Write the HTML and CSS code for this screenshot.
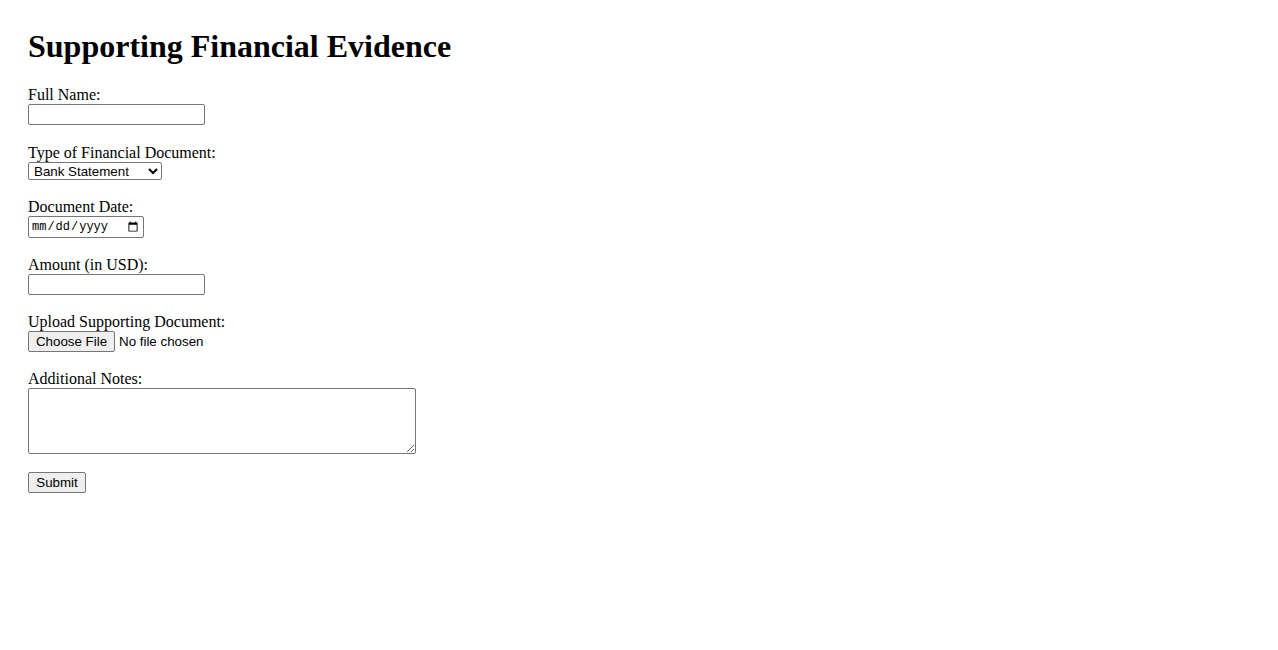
FILE: index.html
```html
<!DOCTYPE html>
<html lang="en">
<head>
<meta charset="utf-8">
<title>Supporting Financial Evidence</title>
<link rel="stylesheet" href="styles.css">
</head>
<body>
<h1 class="title">Supporting Financial Evidence</h1>
<form class="form">
  <div class="field">
    <label class="label" for="name">Full Name:</label>
    <input class="text-input" type="text" id="name" name="name">
  </div>
  <div class="field">
    <label class="label" for="doctype">Type of Financial Document:</label>
    <select class="select" id="doctype" name="doctype">
      <option>Bank Statement</option>
      <option>Pay Stub</option>
      <option>Tax Return</option>
      <option>Other</option>
    </select>
  </div>
  <div class="field">
    <label class="label" for="docdate">Document Date:</label>
    <input class="date-input" type="date" id="docdate" name="docdate">
  </div>
  <div class="field">
    <label class="label" for="amount">Amount (in USD):</label>
    <input class="text-input" type="number" id="amount" name="amount">
  </div>
  <div class="field">
    <label class="label" for="upload">Upload Supporting Document:</label>
    <input class="file-input" type="file" id="upload" name="upload">
  </div>
  <div class="field">
    <label class="label" for="notes">Additional Notes:</label>
    <textarea class="notes" id="notes" name="notes" rows="4" cols="50"></textarea>
  </div>
  <button class="submit" type="submit">Submit</button>
</form>
</body>
</html>
```
FILE: styles.css
```css
html, body {
  background: #ffffff;
}
body {
  margin: 0;
  padding: 28px;
  font-family: "Liberation Serif", "Times New Roman", serif;
  font-size: 16px;
  color: #000000;
}
.title {
  margin: 0 0 21px 0;
  font-family: "Liberation Serif", "Times New Roman", serif;
  font-size: 32px;
  font-weight: bold;
  line-height: 37px;
}
.form {
  margin: 0;
}
.field {
  margin-bottom: 18px;
}
.field:first-child {
  margin-bottom: 19px;
}
.label {
  display: block;
  line-height: 18px;
  height: 18px;
}
.text-input,
.select,
.date-input,
.file-input,
.notes,
.submit {
  display: block;
  box-sizing: border-box;
  font-family: "Liberation Sans", Arial, sans-serif;
  font-size: 13.333px;
  margin: 0;
}
.text-input {
  width: 177px;
  height: 21px;
  padding: 1px 2px;
  border: 1px solid #767676;
  border-radius: 2px;
  -moz-appearance: textfield;
}
.text-input::-webkit-outer-spin-button,
.text-input::-webkit-inner-spin-button {
  -webkit-appearance: none;
  margin: 0;
}
.select {
  width: 134px;
  height: 18px;
  padding: 0 0 0 1px;
  border: 1px solid #767676;
  border-radius: 2px;
  background: #ffffff;
  color: #000000;
}
.date-input {
  width: 116px;
  height: 22px;
  padding: 1px 2px;
  border: 1px solid #767676;
  border-radius: 2px;
  font-family: "Liberation Mono", "DejaVu Sans Mono", monospace;
  font-size: 12px;
}
.file-input {
  height: 21px;
  font-size: 13.333px;
}
.file-input::file-selector-button {
  height: 21px;
  width: 87px;
  margin-right: 4px;
  border: 1px solid #767676;
  border-radius: 2px;
  background: #efefef;
  font-family: "Liberation Sans", Arial, sans-serif;
  font-size: 13.333px;
  color: #000000;
}
.notes {
  width: 388px;
  height: 66px;
  padding: 2px;
  border: 1px solid #767676;
  border-radius: 2px;
  resize: both;
}
.submit {
  width: 58px;
  height: 21px;
  padding: 1px 6px;
  border: 1px solid #767676;
  border-radius: 2px;
  background: #efefef;
  color: #000000;
}
```
